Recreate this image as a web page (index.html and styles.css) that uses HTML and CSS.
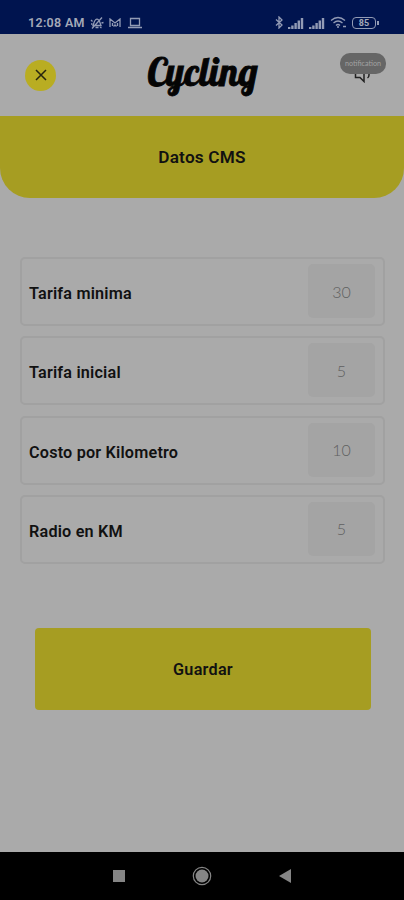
FILE: index.html
```
<!DOCTYPE html>
<html lang="es">
  <head>
    <title>Cycling</title>
    <meta charset="utf-8" />
    <meta name="viewport" content="width=device-width, initial-scale=1" />
    <link rel="stylesheet" href="styles.css">
  </head>
  <body>
    <div class="status">
      <span class="time">12:08 AM</span>
      <svg class="s-mute" width="14" height="14" viewBox="0 0 14 14">
        <path d="M3 9.500C4 8 3.500 4 7 3c3.500 1 3 5 4 6.500zM5.500 11.500h3M2 12.500L12 1.500M1 4l1.500 1.500M11.500 7l2-.5M1 8h1.500M10 11l1.500 1" />
      </svg>
      <svg class="s-cast" width="12" height="10" viewBox="0 0 12 10">
        <path d="M1 9V1l5 4 5-4v8M3.500 8V5M8.500 8V5M4.500 8.500L6 7l1.500 1.500" />
      </svg>
      <svg class="s-laptop" width="14" height="12" viewBox="0 0 14 12">
        <path d="M2.500 1.500h9v7h-9zM0 10.500h14" />
      </svg>
      <div class="status-right">
        <svg width="8" height="13" viewBox="0 0 8 13">
          <path d="M1 3.500l6 5.500-3 3V1l3 3-6 5.500" />
        </svg>
        <svg class="fill" width="16" height="12" viewBox="0 0 16 12">
          <path d="M0 10h2.400v2H0zM3.200 8.500h2.400V12H3.200zM6.400 6h2.400v6H6.400zM9.600 3.500H12V12H9.600zM12.800 1h2.400v11h-2.400z" />
        </svg>
        <svg class="fill" width="16" height="12" viewBox="0 0 16 12">
          <path d="M0 10h2.400v2H0zM3.200 8.500h2.400V12H3.200zM6.400 6h2.400v6H6.400zM9.600 3.500H12V12H9.600zM12.800 1h2.400v11h-2.400z" />
        </svg>
        <svg class="s-wifi" width="17" height="13" viewBox="0 0 17 13">
          <path d="M1 4.500q7-6 14 0M3.500 7q4.500-4 9 0M6 9.500q2-2 4 0M7 11h2M13 10.500h3" />
        </svg>
        <div class="battery">85</div>
      </div>
    </div>

    <header class="header">
      <button class="close" type="button" aria-label="Cerrar">
        <svg width="12" height="12" viewBox="0 0 12 12">
          <path d="M1 1l10 10M11 1L1 11" />
        </svg>
      </button>
      <h1 class="logo">Cycling</h1>
      <div class="notify">
        <svg width="18" height="22" viewBox="0 0 18 22">
          <path d="M1.500 8v8.500h4.500l4 4V8M15 8v6q0 2-1.500 3" />
        </svg>
        <span class="badge">notification</span>
      </div>
    </header>

    <h2 class="title">Datos CMS</h2>

    <form class="form">
      <label class="row">
        <span>Tarifa minima</span>
        <input class="value" type="text" value="30" />
      </label>
      <label class="row">
        <span>Tarifa inicial</span>
        <input class="value" type="text" value="5" />
      </label>
      <label class="row">
        <span>Costo por Kilometro</span>
        <input class="value" type="text" value="10" />
      </label>
      <label class="row">
        <span>Radio en KM</span>
        <input class="value" type="text" value="5" />
      </label>
      <button class="btn" type="button">Guardar</button>
    </form>

    <nav class="nav">
      <svg width="14" height="14" viewBox="0 0 14 14">
        <path d="M1 1h12v12H1z" />
      </svg>
      <svg width="20" height="20" viewBox="0 0 20 20">
        <circle cx="10" cy="10" r="6.500" />
        <circle class="ring" cx="10" cy="10" r="8.700" />
      </svg>
      <svg width="14" height="16" viewBox="0 0 14 16">
        <path d="M1 8l12-7v14z" />
      </svg>
    </nav>
  </body>
</html>
```

FILE: styles.css
```
* {
  box-sizing: border-box;
}
body {
  margin: 0;
  height: 900px;
  display: flex;
  flex-direction: column;
  background: #aaaaaa;
  color: #111;
  font-family: Roboto, "Liberation Sans", sans-serif;
  overflow: hidden;
}
.status {
  height: 34px;
  padding: 11px 26px 0 28px;
  display: flex;
  align-items: center;
  background: #00144f;
  color: #a4a9b8;
}
.status svg {
  fill: none;
  stroke: #929bb5;
  stroke-width: 1.3;
}
.status .fill {
  fill: #929bb5;
  stroke: none;
}
.time {
  width: 62px;
  font-size: 12.5px;
  font-weight: 600;
  letter-spacing: 0.3px;
  white-space: nowrap;
}
.s-cast {
  margin-left: 5px;
}
.s-laptop {
  margin-left: 7px;
}
.status-right {
  margin-left: auto;
  display: flex;
  align-items: center;
  gap: 5px;
}
.battery {
  width: 24px;
  height: 12px;
  margin-right: 2px;
  border: 1.5px solid #929bb5;
  border-radius: 4px;
  position: relative;
  font-size: 9px;
  font-weight: bold;
  line-height: 10px;
  text-align: center;
}
.battery::after {
  content: "";
  position: absolute;
  right: -4px;
  top: 3px;
  width: 2px;
  height: 4px;
  background: #929bb5;
}
.header {
  height: 82px;
  padding: 0 18px 0 25px;
  display: grid;
  grid-template-columns: 46px 1fr 46px;
  align-items: center;
}
.close {
  width: 31px;
  height: 31px;
  padding: 0;
  display: flex;
  align-items: center;
  justify-content: center;
  background: #b9ad22;
  border: none;
  border-radius: 50%;
}
.close svg {
  fill: none;
  stroke: #26240f;
  stroke-width: 1.5;
}
.logo {
  margin: 0 6px 6px 0;
  color: #050505;
  font-family: Lobster, "Liberation Serif", serif;
  font-size: 38.2px;
  font-weight: normal;
  line-height: 50px;
  text-align: center;
  -webkit-text-stroke: 0.8px #050505;
}
.notify {
  height: 30px;
  margin-bottom: 14px;
  position: relative;
  display: flex;
  justify-content: center;
}
.notify svg {
  margin-top: 8px;
  flex: none;
  fill: none;
  stroke: #222;
  stroke-width: 1.5;
}
.badge {
  position: absolute;
  top: 0;
  left: 0;
  width: 46px;
  height: 21px;
  border-radius: 10px;
  background: #666;
  color: #a2a2a2;
  font-family: Lato, sans-serif;
  font-size: 7.2px;
  line-height: 22px;
  text-align: center;
}
.title {
  height: 82px;
  margin: 0;
  background: #a69d22;
  border-radius: 0 0 30px 30px;
  font-size: 17.2px;
  font-weight: 600;
  letter-spacing: 0.2px;
  line-height: 83px;
  text-align: center;
}
.form {
  flex: 1;
  padding: 59px 19px 0 20px;
  display: flex;
  flex-direction: column;
  gap: 10.300px;
}
.row {
  height: 69px;
  padding: 4px 8px 0 7px;
  display: flex;
  align-items: center;
  justify-content: space-between;
  border: 2px solid #a1a1a1;
  border-radius: 5px;
  font-size: 16.2px;
  font-weight: 600;
  letter-spacing: 0.2px;
}
.value {
  width: 67px;
  height: 54px;
  margin-bottom: 5px;
  padding: 0;
  background: #a4a4a4;
  border: none;
  border-radius: 5px;
  color: #606060;
  font-family: Lato, sans-serif;
  font-size: 16px;
  font-weight: 300;
  text-align: center;
}
.btn {
  height: 82px;
  margin: 54px 14px 0 15px;
  padding: 1px 0 0;
  background: #a69d22;
  border: none;
  border-radius: 4px;
  color: #111;
  font-family: inherit;
  font-size: 16.2px;
  font-weight: 600;
  letter-spacing: 0.25px;
  cursor: pointer;
}
.nav {
  height: 48px;
  padding: 0 112px;
  display: flex;
  align-items: center;
  justify-content: space-between;
  background: #000;
}
.nav svg {
  fill: #858585;
}
.nav .ring {
  fill: none;
  stroke: #858585;
  stroke-width: 1.2;
}
```
